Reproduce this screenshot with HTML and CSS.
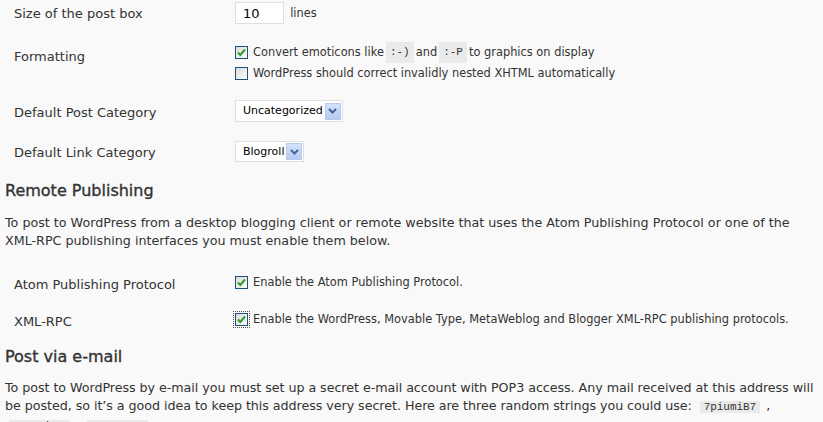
FILE: index.html
```html
<!DOCTYPE html>
<html lang="en">
<head>
    <meta charset="UTF-8">
    <title>Writing Options</title>
    <link rel="stylesheet" href="styles.css">
</head>
<body>
    <div class="wrap">
        <div class="form-table top-table">
            <div class="field row-size">
                <div class="field-label">Size of the post box</div>
                <div class="field-control">
                    <span class="text-input">10</span> <span class="small">lines</span>
                </div>
            </div>

            <div class="field row-format">
                <div class="field-label">Formatting</div>
                <div class="field-control small">
                    <div class="check-line">
                        <span class="checkbox checked"><svg viewBox="0 0 11 11" width="11" height="11"><path d="M2 5.5 L4.3 8 L9 2.5" fill="none" stroke="#2f9a2f" stroke-width="2"/></svg></span>
                        Convert emoticons like <code>:-)</code> and <code>:-P</code> to graphics on display
                    </div>
                    <div class="check-line">
                        <span class="checkbox"></span>
                        WordPress should correct invalidly nested XHTML automatically
                    </div>
                </div>
            </div>

            <div class="field row-post-cat">
                <div class="field-label">Default Post Category</div>
                <div class="field-control">
                    <span class="select">Uncategorized<span class="select-arrow"><svg viewBox="0 0 9 6" width="9" height="6"><path d="M1 1 L4.5 4.5 L8 1" fill="none" stroke="#44629c" stroke-width="2"/></svg></span></span>
                </div>
            </div>

            <div class="field row-link-cat">
                <div class="field-label">Default Link Category</div>
                <div class="field-control">
                    <span class="select">Blogroll<span class="select-arrow"><svg viewBox="0 0 9 6" width="9" height="6"><path d="M1 1 L4.5 4.5 L8 1" fill="none" stroke="#44629c" stroke-width="2"/></svg></span></span>
                </div>
            </div>
        </div>

        <h3 class="section-title remote-title">Remote Publishing</h3>
        <p class="section-text remote-text">To post to WordPress from a desktop blogging client or remote website that uses the Atom Publishing Protocol or one of the XML-RPC publishing interfaces you must enable them below.</p>

        <div class="form-table remote-table">
            <div class="field row-atom">
                <div class="field-label">Atom Publishing Protocol</div>
                <div class="field-control small">
                    <div class="check-line">
                        <span class="checkbox checked"><svg viewBox="0 0 11 11" width="11" height="11"><path d="M2 5.5 L4.3 8 L9 2.5" fill="none" stroke="#2f9a2f" stroke-width="2"/></svg></span>
                        Enable the Atom Publishing Protocol.
                    </div>
                </div>
            </div>

            <div class="field row-xmlrpc">
                <div class="field-label">XML-RPC</div>
                <div class="field-control small">
                    <div class="check-line">
                        <span class="checkbox checked focused"><svg viewBox="0 0 11 11" width="11" height="11"><path d="M2 5.5 L4.3 8 L9 2.5" fill="none" stroke="#2f9a2f" stroke-width="2"/></svg></span>
                        Enable the WordPress, Movable Type, MetaWeblog and Blogger XML-RPC publishing protocols.
                    </div>
                </div>
            </div>
        </div>

        <h3 class="section-title email-title">Post via e-mail</h3>
        <p class="section-text email-text">To post to WordPress by e-mail you must set up a secret e-mail account with POP3 access. Any mail received at this address will be posted, so it&rsquo;s a good idea to keep this address very secret. Here are three random strings you could use: <code>7piumiB7</code>, <code>e9CWMk7x</code>, <code>xZM8qqNT</code>.</p>
    </div>
</body>
</html>
```

FILE: styles.css
```css
body {
    margin: 0;
    padding: 1px 0 0;
    background-color: #f9f9f9;
    color: #333;
    font-family: "DejaVu Sans", Verdana, sans-serif;
    font-size: 13px;
    line-height: 18px;
    overflow: hidden;
}

.wrap {
    padding: 0 5px;
}

.form-table {
    padding-left: 9px;
}

.field {
    display: grid;
    grid-template-columns: 221px 1fr;
    align-items: start;
}

.field-label {
    padding-top: 3px;
}

.small {
    font-size: 11.4px;
}

/* row spacing */
.row-size {
    margin-top: 1px;
}

.row-format {
    margin-top: 18px;
}

.row-format .field-label {
    padding-top: 6px;
}

.row-format .check-line {
    line-height: 21px;
}

.row-post-cat {
    margin-top: 16px;
}

.row-post-cat .field-label {
    padding-top: 4px;
}

.row-link-cat {
    margin-top: 19px;
}

.remote-table {
    margin-top: 23px;
}

.row-xmlrpc {
    margin-top: 16px;
}

/* inputs */
.text-input {
    display: inline-block;
    box-sizing: border-box;
    width: 49px;
    height: 22px;
    padding: 2px 7px;
    margin-right: 2px;
    background-color: #fff;
    border: 1px solid #dfdfdf;
    color: #000;
    vertical-align: middle;
}

.check-line {
    display: flex;
    align-items: center;
    white-space: nowrap;
}

.checkbox {
    display: inline-flex;
    align-items: center;
    justify-content: center;
    box-sizing: border-box;
    width: 13px;
    height: 13px;
    margin-right: 5px;
    border: 1px solid #1c5180;
    background: linear-gradient(135deg, #dcdcd7, #fbfbf8);
    flex-shrink: 0;
}

.checkbox.focused {
    outline: 1px dotted #555;
    outline-offset: 1px;
}

.select {
    display: inline-flex;
    align-items: center;
    box-sizing: border-box;
    height: 22px;
    padding: 0 1px 0 7px;
    background-color: #fff;
    border: 1px solid #dfdfdf;
    color: #000;
    font-size: 11px;
}

.select-arrow {
    display: inline-flex;
    align-items: center;
    justify-content: center;
    width: 16px;
    height: 17px;
    margin-left: 2px;
    background: linear-gradient(#d4e1fa, #b6cbf3);
    border: 1px solid #b7c9ef;
    box-sizing: border-box;
}

.row-link-cat .select {
    height: 21px;
}

code {
    font-family: "Liberation Mono", "Courier New", monospace;
    font-size: 11px;
    padding: 0 4px;
    margin: 0 2px;
    background-color: #eaeaea;
}

/* headings and text */
.section-title {
    margin: 0;
    font-size: 16px;
    font-weight: normal;
    line-height: 20px;
    -webkit-text-stroke: 0.35px #333;
}

.remote-title {
    margin-top: 19px;
}

.email-title {
    margin-top: 16px;
}

.section-text {
    margin: 13px 0 0;
    font-size: 12.7px;
}

.email-text {
    margin: 12px -5px 0 0;
    letter-spacing: -0.05px;
}

.email-text code {
    margin: 0 6px 0 4px;
}
```
